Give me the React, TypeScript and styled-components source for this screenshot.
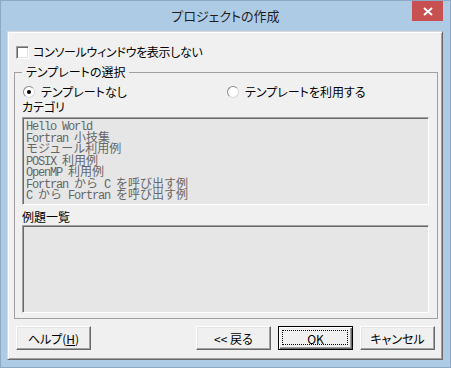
import React from "react";
import styled, { createGlobalStyle, css } from "styled-components";

const UI_FONT = `"Noto Sans CJK JP", "Noto Sans", sans-serif`;
const MONO_FONT = `"Liberation Mono", "DejaVu Sans Mono", "Noto Sans CJK JP", monospace`;

const GlobalStyle = createGlobalStyle`
  html, body { margin: 0; padding: 0; }
  body { background: #aecbe6; font-family: ${UI_FONT}; }
  * { box-sizing: border-box; }
`;

const Window = styled.div`
  width: 451px;
  height: 368px;
  display: flex;
  flex-direction: column;
  background: #aecbe6;
  border: 1px solid #8ea9c6;
`;

const TitleBar = styled.div`
  height: 30px;
  flex: none;
  display: grid;
  grid-template-columns: 1fr auto 1fr;
  align-items: start;
`;

const Title = styled.div`
  grid-column: 2;
  font-size: 13px;
  line-height: 29px;
  font-family: ${UI_FONT};
  font-feature-settings: "palt";
  color: #1e1e1e;
`;

const CloseButton = styled.div`
  grid-column: 3;
  justify-self: end;
  width: 31px;
  height: 20px;
  margin-right: 7px;
  background: #c75050;
  display: flex;
  align-items: center;
  justify-content: center;
`;

const Client = styled.div`
  flex: 1;
  margin: 0 7px 7px 6px;
  background: #f0f0f0;
  border: 1px solid;
  border-color: #d9d9d9 #696969 #696969 #d9d9d9;
  box-shadow: inset 1px 1px #fff, inset -1px -1px #a0a0a0;
  display: flex;
  flex-direction: column;
  padding: 13px 4px 0 6px;
  font-family: ${UI_FONT};
  font-size: 12px;
  font-feature-settings: "palt";
  color: #000;
`;

const CheckRow = styled.label`
  display: flex;
  align-items: center;
  gap: 4px;
  height: 14px;
  margin-left: 2px;
  line-height: 14px;
  letter-spacing: -0.3px;
`;

const CheckBox = styled.span`
  width: 13px;
  height: 13px;
  flex: none;
  background: #fff;
  border: 1px solid;
  border-color: #a0a0a0 #fff #fff #a0a0a0;
  box-shadow: inset 1px 1px #696969, inset -1px -1px #e3e3e3;
`;

const Group = styled.fieldset`
  margin: 6px 0 0 0;
  padding: 0 8px 5px 7px;
  border: 1px solid #a0a0a0;
  min-width: 0;
`;

const Legend = styled.legend`
  margin: 0;
  padding: 0 4px;
  line-height: 14px;
  font-size: 12px;
`;

const RadioRow = styled.div`
  display: grid;
  grid-template-columns: 204px 1fr;
  height: 14px;
  margin: 6px 0 0 1px;
`;

const RadioItem = styled.label`
  display: flex;
  align-items: center;
  gap: 6px;
  line-height: 14px;
`;

const Radio = styled.span<{ $checked?: boolean }>`
  width: 12px;
  height: 12px;
  flex: none;
  border-radius: 50%;
  background: #fff;
  border: 1px solid;
  border-color: #8a8a8a #d8d8d8 #d8d8d8 #8a8a8a;
  display: flex;
  align-items: center;
  justify-content: center;
  ${(p) =>
    p.$checked &&
    css`
      &::after {
        content: "";
        width: 4px;
        height: 4px;
        border-radius: 50%;
        background: #000;
      }
    `}
`;

const FieldLabel = styled.div<{ $top: number }>`
  line-height: 14px;
  height: 14px;
  margin-top: ${(p) => p.$top}px;
`;

const ListBox = styled.div<{ $top: number }>`
  height: 88px;
  flex: none;
  margin-top: ${(p) => p.$top}px;
  background: #e6e6e6;
  border: 1px solid;
  border-color: #a0a0a0 #fff #fff #a0a0a0;
  box-shadow: inset 1px 1px #696969;
  padding: 4px 0 0 3px;
  overflow: hidden;
  font-family: ${MONO_FONT};
  font-size: 12px;
  letter-spacing: -1.2px;
  color: #666;
  font-feature-settings: normal;
`;

const ListItem = styled.div`
  white-space: pre;
  height: 11.5px;
  line-height: 11.5px;
`;

const Wide = styled.span`
  font-family: ${UI_FONT};
  font-size: 12px;
  letter-spacing: 0;
  line-height: 0;
`;

const ButtonRow = styled.div`
  display: flex;
  align-items: center;
  gap: 7px;
  margin: 7px 3px 0 2px;
`;

const Spacer = styled.div`
  flex: 1;
`;

const Button = styled.button<{ $default?: boolean }>`
  width: 75px;
  height: 24px;
  padding: 0;
  position: relative;
  background: #f0f0f0;
  font-family: ${UI_FONT};
  font-size: 12px;
  font-feature-settings: "palt";
  color: #000;
  border: 1px solid;
  border-color: #fff #696969 #696969 #fff;
  box-shadow: inset -1px -1px #a0a0a0, inset 1px 1px #e3e3e3;
  ${(p) =>
    p.$default &&
    css`
      border: 1px solid #000;
      box-shadow: inset 1px 1px #fff, inset -1px -1px #696969,
        inset -2px -2px #a0a0a0;
      &::after {
        content: "";
        position: absolute;
        left: 3px;
        top: 3px;
        right: 4px;
        bottom: 4px;
        border: 1px dotted #000;
      }
    `}
`;

const Mnemonic = styled.span`
  text-decoration: underline;
`;

const categories = [
  "Hello World",
  "Fortran 小技集",
  "モジュール利用例",
  "POSIX 利用例",
  "OpenMP 利用例",
  "Fortran から C を呼び出す例",
  "C から Fortran を呼び出す例",
];

function Runs({ text }: { text: string }) {
  const parts = text.split(/([^\x00-\x7f]+)/);
  return (
    <>
      {parts.map((p, i) =>
        i % 2 ? <Wide key={i}>{p}</Wide> : <React.Fragment key={i}>{p}</React.Fragment>
      )}
    </>
  );
}

export default function App() {
  return (
    <>
      <GlobalStyle />
      <Window>
        <TitleBar>
          <Title>プロジェクトの作成</Title>
          <CloseButton>
            <svg width="10" height="9" viewBox="0 0 10 9">
              <path d="M1 1 L9 8 M9 1 L1 8" stroke="#fff" strokeWidth="2" />
            </svg>
          </CloseButton>
        </TitleBar>
        <Client>
          <CheckRow>
            <CheckBox />
            <span>コンソールウィンドウを表示しない</span>
          </CheckRow>
          <Group>
            <Legend>テンプレートの選択</Legend>
            <RadioRow>
              <RadioItem>
                <Radio $checked />
                <span>テンプレートなし</span>
              </RadioItem>
              <RadioItem>
                <Radio />
                <span>テンプレートを利用する</span>
              </RadioItem>
            </RadioRow>
            <FieldLabel $top={1}>カテゴリ</FieldLabel>
            <ListBox $top={3}>
              {categories.map((c) => (
                <ListItem key={c}>
                  <Runs text={c} />
                </ListItem>
              ))}
            </ListBox>
            <FieldLabel $top={5}>例題一覧</FieldLabel>
            <ListBox $top={1} />
          </Group>
          <ButtonRow>
            <Button>
              ヘルプ(<Mnemonic>H</Mnemonic>)
            </Button>
            <Spacer />
            <Button>&lt;&lt; 戻る</Button>
            <Button $default>OK</Button>
            <Button>キャンセル</Button>
          </ButtonRow>
        </Client>
      </Window>
    </>
  );
}
